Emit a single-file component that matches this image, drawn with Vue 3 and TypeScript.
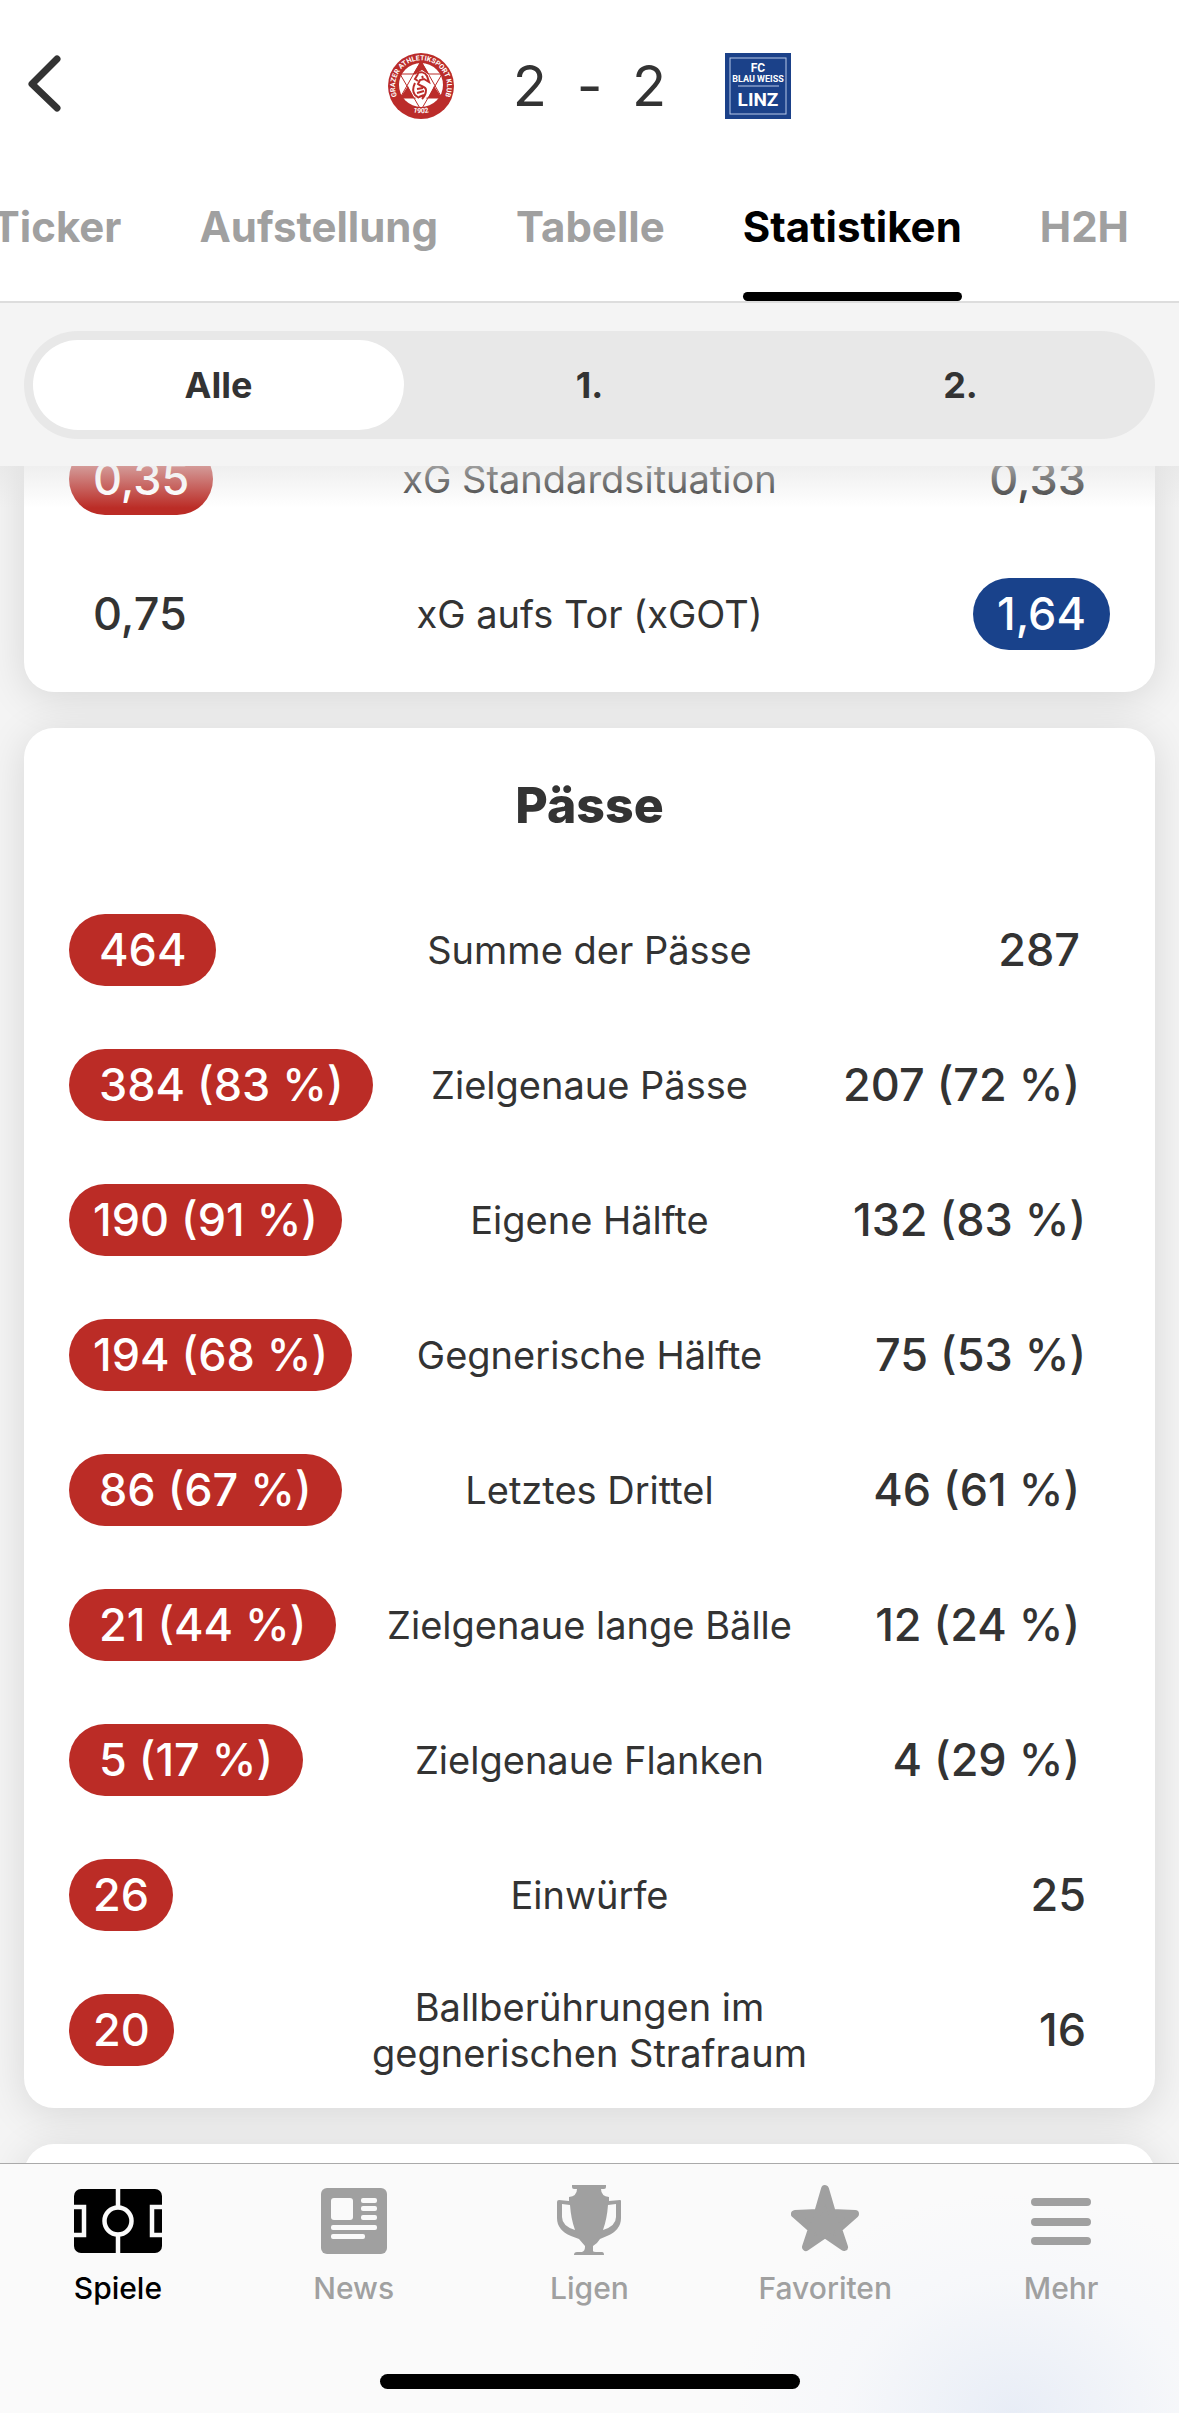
<script setup lang="ts">
import { ref } from 'vue'

type Side = 'home' | 'away'

interface Stat {
  label: string
  home: string
  away: string
  lead: Side
  tight?: boolean
}

const tabs = ['Ticker', 'Aufstellung', 'Tabelle', 'Statistiken', 'H2H']
const activeTab = ref('Statistiken')

const periods = ['Alle', '1.', '2.']
const activePeriod = ref('Alle')

const expectedGoals: Stat[] = [
  { label: 'xG Standardsituation', home: '0,35', away: '0,33', lead: 'home', tight: true },
  { label: 'xG aufs Tor (xGOT)', home: '0,75', away: '1,64', lead: 'away', tight: true },
]

const passes: Stat[] = [
  { label: 'Summe der Pässe', home: '464', away: '287', lead: 'home' },
  { label: 'Zielgenaue Pässe', home: '384 (83 %)', away: '207 (72 %)', lead: 'home' },
  { label: 'Eigene Hälfte', home: '190 (91 %)', away: '132 (83 %)', lead: 'home', tight: true },
  { label: 'Gegnerische Hälfte', home: '194 (68 %)', away: '75 (53 %)', lead: 'home', tight: true },
  { label: 'Letztes Drittel', home: '86 (67 %)', away: '46 (61 %)', lead: 'home' },
  { label: 'Zielgenaue lange Bälle', home: '21 (44 %)', away: '12 (24 %)', lead: 'home' },
  { label: 'Zielgenaue Flanken', home: '5 (17 %)', away: '4 (29 %)', lead: 'home' },
  { label: 'Einwürfe', home: '26', away: '25', lead: 'home', tight: true },
  { label: 'Ballberührungen im gegnerischen Strafraum', home: '20', away: '16', lead: 'home', tight: true },
]

const groups = [
  { id: 'xg', title: '', stats: expectedGoals },
  { id: 'passes', title: 'Pässe', stats: passes },
]
</script>

<template>
  <div class="app">
    <header class="match">
      <button class="back" type="button" aria-label="Zurück">
        <svg width="44" height="64" viewBox="0 0 44 64" fill="none" stroke="#333" stroke-width="7" stroke-linecap="round" stroke-linejoin="round">
          <path d="M33 7 8 32 33 56" />
        </svg>
      </button>
      <svg class="crest" viewBox="0 0 66 66" role="img" aria-label="Grazer AK">
        <defs>
          <path id="ring-top" d="M14 51A26 26 0 1 1 52 51" />
          <path id="ring-bottom" d="M16 55A30 30 0 0 0 50 55" />
        </defs>
        <circle cx="33" cy="33" r="33" fill="#bb2c2a" />
        <circle cx="33" cy="32" r="22" fill="#fff" />
        <path d="M33 8 41 21H25ZM20 33 26 45H12ZM46 33 54 45H40Z" fill="#bb2c2a" />
        <path d="M33 8 54 45H12ZM33 57 12 21H54Z" fill="none" stroke="#bb2c2a" />
        <path d="M29 20 34 17 41 22 39 30 41 37 38 46H28L25 37 28 32 24 27Z" fill="#fff" />
        <path d="M29 21c3-3 8-2 10 2l2 6-5-3-4 1-2 4c3 3 8 2 8 6s-2 7-4 9M30 21l-3 5 3 2M27 30c-2 4-3 8 0 12l4 3M29 36l6-1M29 40l7-2M31 44l5-2M32 32l5 3M34 23l1 2" fill="none" stroke="#bb2c2a" stroke-width="2" />
        <text class="ring-text"><textPath href="#ring-top" startOffset="50%">GRAZER ATHLETIKSPORT KLUB</textPath></text>
        <text class="ring-text"><textPath href="#ring-bottom" startOffset="50%">1902</textPath></text>
      </svg>
      <div class="score"><span>2</span><span>-</span><span>2</span></div>
      <svg class="crest" viewBox="0 0 66 66" role="img" aria-label="FC Blau Weiß Linz">
        <rect width="66" height="66" fill="#1b4189" />
        <rect x="5" y="5" width="56" height="56" fill="none" stroke="#b9c9e8" />
        <path d="M13 33H54" stroke="#b9c9e8" />
        <g class="crest-text">
          <text x="33" y="19" font-size="12">FC</text>
          <text x="33" y="29" font-size="9">BLAU WEISS</text>
          <text x="33" y="53" font-size="19">LINZ</text>
        </g>
      </svg>
    </header>

    <nav class="tabs" aria-label="Spielansichten">
      <button
        v-for="tab in tabs"
        :key="tab"
        type="button"
        class="tab"
        :class="{ active: tab === activeTab }"
        @click="activeTab = tab"
      >
        {{ tab }}
      </button>
    </nav>

    <div class="filter">
      <div class="segments">
        <button
          v-for="period in periods"
          :key="period"
          type="button"
          class="segment"
          :class="{ active: period === activePeriod }"
          @click="activePeriod = period"
        >
          {{ period }}
        </button>
      </div>
    </div>

    <main class="content">
      <div class="cards">
        <section v-for="group in groups" :key="group.id" class="card">
          <h2 v-if="group.title" class="title">{{ group.title }}</h2>
          <table class="stats">
            <tbody>
              <tr v-for="stat in group.stats" :key="stat.label" :class="{ tight: stat.tight }">
                <td class="home"><span class="value" :class="{ lead: stat.lead === 'home' }">{{ stat.home }}</span></td>
                <th scope="row">{{ stat.label }}</th>
                <td class="away"><span class="value" :class="{ lead: stat.lead === 'away' }">{{ stat.away }}</span></td>
              </tr>
            </tbody>
          </table>
        </section>
        <section class="card next"></section>
      </div>
    </main>

    <footer class="bottom">
      <nav class="menu" aria-label="Hauptmenü">
        <a href="#spiele" class="item active">
          <svg width="88" height="72" viewBox="0 0 88 72">
            <rect y="5" width="88" height="64" rx="7" fill="currentColor" />
            <g fill="none" stroke="#fafafa" stroke-width="4.500">
              <path d="M44 5V23M44 51V69M0 23H10V51H0M88 23H78V51H88" />
              <circle cx="44" cy="37" r="13.500" />
            </g>
          </svg>
          Spiele
        </a>
        <a href="#news" class="item">
          <svg width="66" height="72" viewBox="0 0 66 72">
            <rect y="4" width="66" height="66" rx="6" fill="currentColor" />
            <g fill="#fafafa">
              <rect x="10" y="14" width="22" height="22" rx="3" />
              <rect x="40" y="14" width="16" height="5" rx="2" />
              <rect x="40" y="22" width="16" height="5" rx="2" />
              <rect x="40" y="31" width="16" height="5" rx="2" />
              <rect x="10" y="41" width="46" height="5" rx="2" />
              <rect x="10" y="50" width="34" height="5" rx="2" />
            </g>
          </svg>
          News
        </a>
        <a href="#ligen" class="item">
          <svg width="64" height="72" viewBox="0 0 64 72">
            <path d="M15 1H49V3Q49 5 47 5H44Q44 12 52 13V17L63 16Q64 16 64 17V34Q64 46 50 52L43 55Q40 60 36 62V67Q36 68 39 68H45Q47 68 47 71H17Q17 68 20 68H25Q28 67 28 63V62L22 55L14 52Q0 46 0 34V18Q0 16 2 16L12 17V13Q20 12 20 5H17Q15 5 15 3Z" fill="currentColor" />
            <path d="M13 21 5 20V33Q5 42 18 46Q14 35 13 21ZM51 21 59 20V33Q59 42 46 46Q50 35 51 21Z" fill="#fafafa" />
          </svg>
          Ligen
        </a>
        <a href="#favoriten" class="item">
          <svg width="68" height="72" viewBox="0 0 68 72">
            <path d="M34 5 41 29 64 30 47 45 53 63 34 50 15 63 21 45 4 30 27 29Z" fill="currentColor" stroke="currentColor" stroke-width="8" stroke-linejoin="round" />
          </svg>
          Favoriten
        </a>
        <a href="#mehr" class="item">
          <svg width="60" height="72" viewBox="0 0 60 72">
            <path d="M4 18H56M4 38H56M4 57H56" stroke="currentColor" stroke-width="8" stroke-linecap="round" />
          </svg>
          Mehr
        </a>
      </nav>
      <div class="indicator"></div>
    </footer>
  </div>
</template>

<style>
body {
  background: #f4f4f4;
}
</style>

<style scoped>
.app {
  display: flex;
  flex-direction: column;
  height: 100vh;
  overflow: hidden;
  background: #f4f4f4;
  color: #333;
  font-family: Inter, "Liberation Sans", sans-serif;
}

button {
  padding: 0;
  border: 0;
  background: none;
  color: inherit;
  font: inherit;
}

.match {
  position: relative;
  display: flex;
  flex: none;
  align-items: center;
  justify-content: center;
  gap: 46px;
  height: 172px;
  background: #fff;
}

.back {
  position: absolute;
  top: 52px;
  left: 24px;
}

.back svg {
  display: block;
}

.crest {
  width: 66px;
  height: 66px;
}

.ring-text {
  fill: #fff;
  font-size: 7px;
  font-weight: 700;
  font-family: Roboto, "Liberation Sans", sans-serif;
  text-anchor: middle;
}

.crest-text {
  fill: #fff;
  font-family: Roboto, "Liberation Sans", sans-serif;
  font-weight: 700;
  text-anchor: middle;
}

.score {
  display: flex;
  width: 179px;
  font-size: 56px;
  line-height: 68px;
}

.score span {
  flex: 1;
  text-align: center;
}

.tabs {
  display: flex;
  flex: none;
  justify-content: flex-end;
  gap: 78px;
  height: 129px;
  padding-right: 50px;
  border-bottom: 2px solid #ddd;
  background: #fff;
}

.tab {
  position: relative;
  flex: none;
  padding-bottom: 20px;
  color: #a0a0a0;
  font-size: 42px;
  font-weight: 700;
}

.tab.active {
  color: #000;
}

.tab.active::after {
  content: "";
  position: absolute;
  right: 0;
  bottom: 0;
  left: 0;
  height: 9px;
  border-radius: 5px;
  background: #000;
}

.filter {
  flex: none;
  padding: 28px 24px 27px;
}

.segments {
  display: flex;
  padding: 9px;
  border-radius: 54px;
  background: #e8e8e8;
}

.segment {
  flex: 1;
  height: 90px;
  border-radius: 45px;
  font-size: 36px;
  font-weight: 700;
}

.segment.active {
  background: #fff;
}

.content {
  position: relative;
  flex: 1;
  min-height: 0;
  overflow: hidden;
}

.content::before {
  content: "";
  position: absolute;
  z-index: 1;
  top: 0;
  right: 0;
  left: 0;
  height: 42px;
  background: linear-gradient(rgba(228, 228, 228, 0.6), rgba(244, 244, 244, 0));
}

.cards {
  display: flex;
  flex-direction: column;
  gap: 36px;
  margin-top: -55px;
  padding: 0 24px;
}

.card {
  padding: 0 45px 11px;
  border-radius: 30px;
  background: #fff;
  box-shadow: 0 6px 42px rgba(0, 0, 0, 0.12);
}

.card:first-child {
  border-radius: 0 0 30px 30px;
}

.next {
  min-height: 200px;
}

.title {
  margin: 0;
  font-size: 50px;
  font-weight: 800;
  line-height: 154px;
  text-align: center;
}

.stats {
  width: 100%;
  border-collapse: collapse;
  table-layout: fixed;
}

.stats tr {
  height: 135px;
}

.stats td,
.stats th {
  padding: 0;
  vertical-align: middle;
}

.stats th {
  width: 44%;
  font-size: 38px;
  font-weight: 400;
  line-height: 46px;
}

.home {
  text-align: left;
}

.away {
  text-align: right;
}

.stats .away {
  direction: rtl;
}

.value {
  display: inline-block;
  padding: 0 30px;
  border-radius: 36px;
  direction: ltr;
  font-size: 45px;
  font-weight: 500;
  line-height: 72px;
  white-space: nowrap;
}

.tight .value {
  padding: 0 24px;
}

.home .lead {
  background: #bb2c26;
  color: #fff;
}

.away .lead {
  background: #19428b;
  color: #fff;
}

.bottom {
  display: flex;
  flex: none;
  flex-direction: column;
  align-items: center;
  justify-content: space-between;
  height: 249px;
  border-top: 1px solid #aaa;
  background: radial-gradient(ellipse 280px 220px at 86% 100%, #e8edf6, rgba(244, 246, 250, 0.6) 60%, rgba(250, 250, 250, 0)) #fafafa;
}

.menu {
  display: flex;
  width: 100%;
  padding-top: 20px;
}

.item {
  display: flex;
  flex: 1;
  flex-direction: column;
  align-items: center;
  gap: 14px;
  color: #a0a0a0;
  font-size: 30px;
  font-weight: 500;
  line-height: 36px;
  text-decoration: none;
}

.item.active {
  color: #000;
}

.indicator {
  width: 420px;
  height: 15px;
  margin-bottom: 24px;
  border-radius: 8px;
  background: #000;
}
</style>
